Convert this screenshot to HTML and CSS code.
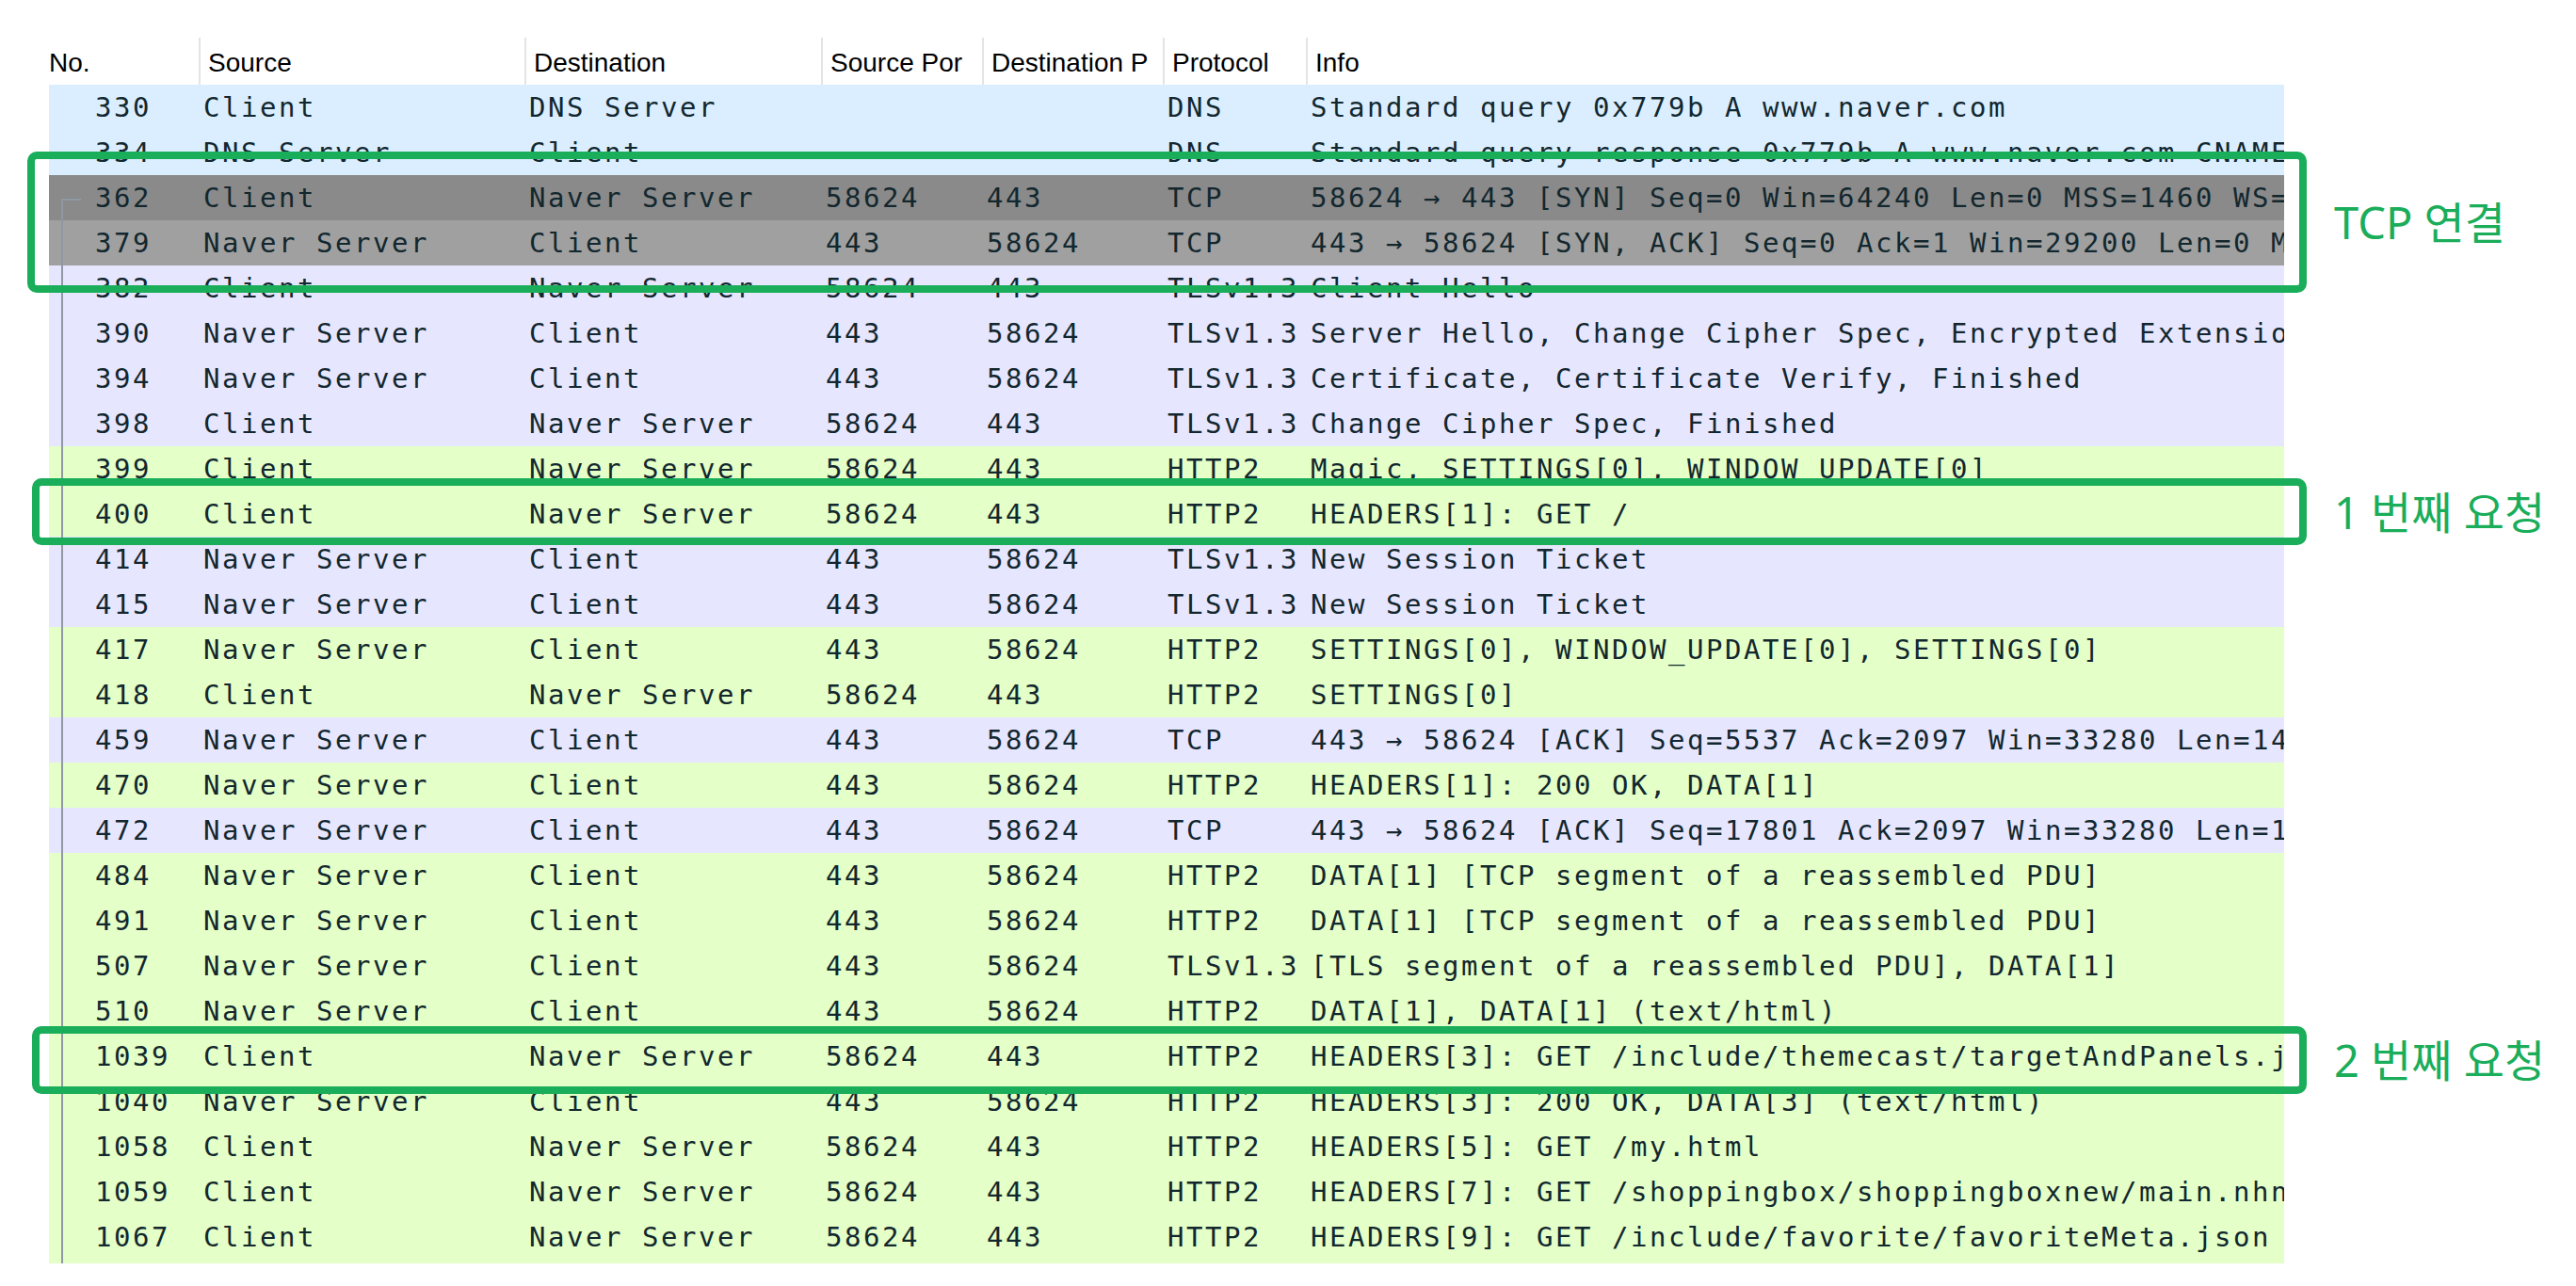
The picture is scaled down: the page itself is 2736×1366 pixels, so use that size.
FILE: index.html
```html
<!DOCTYPE html>
<html lang="ko">
<head>
<meta charset="utf-8">
<title>Wireshark packet list</title>
<link rel="stylesheet" href="styles.css">
</head>
<body>
<div class="capture">
  <div class="packet-list">
    <div class="list-header">
      <div class="hcell first">No.</div>
      <div class="hcell">Source</div>
      <div class="hcell">Destination</div>
      <div class="hcell">Source Por</div>
      <div class="hcell">Destination P</div>
      <div class="hcell">Protocol</div>
      <div class="hcell">Info</div>
    </div>
    <div class="list-body">
      <div class="row udp"><span class="cell no">330</span><span class="cell">Client</span><span class="cell">DNS Server</span><span class="cell"></span><span class="cell"></span><span class="cell">DNS</span><span class="cell">Standard query 0x779b A www.naver.com</span></div>
      <div class="row udp"><span class="cell no">334</span><span class="cell">DNS Server</span><span class="cell">Client</span><span class="cell"></span><span class="cell"></span><span class="cell">DNS</span><span class="cell">Standard query response 0x779b A www.naver.com CNAME www.naver.com.nheos.com A 223.130.195.200</span></div>
      <div class="row syn-sel"><span class="cell no">362</span><span class="cell">Client</span><span class="cell">Naver Server</span><span class="cell">58624</span><span class="cell">443</span><span class="cell">TCP</span><span class="cell">58624 → 443 [SYN] Seq=0 Win=64240 Len=0 MSS=1460 WS=256 SACK_PERM=1</span></div>
      <div class="row syn"><span class="cell no">379</span><span class="cell">Naver Server</span><span class="cell">Client</span><span class="cell">443</span><span class="cell">58624</span><span class="cell">TCP</span><span class="cell">443 → 58624 [SYN, ACK] Seq=0 Ack=1 Win=29200 Len=0 MSS=1460 SACK_PERM=1 WS=128</span></div>
      <div class="row tcp"><span class="cell no">382</span><span class="cell">Client</span><span class="cell">Naver Server</span><span class="cell">58624</span><span class="cell">443</span><span class="cell">TLSv1.3</span><span class="cell">Client Hello</span></div>
      <div class="row tcp"><span class="cell no">390</span><span class="cell">Naver Server</span><span class="cell">Client</span><span class="cell">443</span><span class="cell">58624</span><span class="cell">TLSv1.3</span><span class="cell">Server Hello, Change Cipher Spec, Encrypted Extensions, Certificate</span></div>
      <div class="row tcp"><span class="cell no">394</span><span class="cell">Naver Server</span><span class="cell">Client</span><span class="cell">443</span><span class="cell">58624</span><span class="cell">TLSv1.3</span><span class="cell">Certificate, Certificate Verify, Finished</span></div>
      <div class="row tcp"><span class="cell no">398</span><span class="cell">Client</span><span class="cell">Naver Server</span><span class="cell">58624</span><span class="cell">443</span><span class="cell">TLSv1.3</span><span class="cell">Change Cipher Spec, Finished</span></div>
      <div class="row http"><span class="cell no">399</span><span class="cell">Client</span><span class="cell">Naver Server</span><span class="cell">58624</span><span class="cell">443</span><span class="cell">HTTP2</span><span class="cell">Magic, SETTINGS[0], WINDOW_UPDATE[0]</span></div>
      <div class="row http"><span class="cell no">400</span><span class="cell">Client</span><span class="cell">Naver Server</span><span class="cell">58624</span><span class="cell">443</span><span class="cell">HTTP2</span><span class="cell">HEADERS[1]: GET /</span></div>
      <div class="row tcp"><span class="cell no">414</span><span class="cell">Naver Server</span><span class="cell">Client</span><span class="cell">443</span><span class="cell">58624</span><span class="cell">TLSv1.3</span><span class="cell">New Session Ticket</span></div>
      <div class="row tcp"><span class="cell no">415</span><span class="cell">Naver Server</span><span class="cell">Client</span><span class="cell">443</span><span class="cell">58624</span><span class="cell">TLSv1.3</span><span class="cell">New Session Ticket</span></div>
      <div class="row http"><span class="cell no">417</span><span class="cell">Naver Server</span><span class="cell">Client</span><span class="cell">443</span><span class="cell">58624</span><span class="cell">HTTP2</span><span class="cell">SETTINGS[0], WINDOW_UPDATE[0], SETTINGS[0]</span></div>
      <div class="row http"><span class="cell no">418</span><span class="cell">Client</span><span class="cell">Naver Server</span><span class="cell">58624</span><span class="cell">443</span><span class="cell">HTTP2</span><span class="cell">SETTINGS[0]</span></div>
      <div class="row tcp"><span class="cell no">459</span><span class="cell">Naver Server</span><span class="cell">Client</span><span class="cell">443</span><span class="cell">58624</span><span class="cell">TCP</span><span class="cell">443 → 58624 [ACK] Seq=5537 Ack=2097 Win=33280 Len=1460</span></div>
      <div class="row http"><span class="cell no">470</span><span class="cell">Naver Server</span><span class="cell">Client</span><span class="cell">443</span><span class="cell">58624</span><span class="cell">HTTP2</span><span class="cell">HEADERS[1]: 200 OK, DATA[1]</span></div>
      <div class="row tcp"><span class="cell no">472</span><span class="cell">Naver Server</span><span class="cell">Client</span><span class="cell">443</span><span class="cell">58624</span><span class="cell">TCP</span><span class="cell">443 → 58624 [ACK] Seq=17801 Ack=2097 Win=33280 Len=1460</span></div>
      <div class="row http"><span class="cell no">484</span><span class="cell">Naver Server</span><span class="cell">Client</span><span class="cell">443</span><span class="cell">58624</span><span class="cell">HTTP2</span><span class="cell">DATA[1] [TCP segment of a reassembled PDU]</span></div>
      <div class="row http"><span class="cell no">491</span><span class="cell">Naver Server</span><span class="cell">Client</span><span class="cell">443</span><span class="cell">58624</span><span class="cell">HTTP2</span><span class="cell">DATA[1] [TCP segment of a reassembled PDU]</span></div>
      <div class="row http"><span class="cell no">507</span><span class="cell">Naver Server</span><span class="cell">Client</span><span class="cell">443</span><span class="cell">58624</span><span class="cell">TLSv1.3</span><span class="cell">[TLS segment of a reassembled PDU], DATA[1]</span></div>
      <div class="row http"><span class="cell no">510</span><span class="cell">Naver Server</span><span class="cell">Client</span><span class="cell">443</span><span class="cell">58624</span><span class="cell">HTTP2</span><span class="cell">DATA[1], DATA[1] (text/html)</span></div>
      <div class="row http"><span class="cell no">1039</span><span class="cell">Client</span><span class="cell">Naver Server</span><span class="cell">58624</span><span class="cell">443</span><span class="cell">HTTP2</span><span class="cell">HEADERS[3]: GET /include/themecast/targetAndPanels.json</span></div>
      <div class="row http"><span class="cell no">1040</span><span class="cell">Naver Server</span><span class="cell">Client</span><span class="cell">443</span><span class="cell">58624</span><span class="cell">HTTP2</span><span class="cell">HEADERS[3]: 200 OK, DATA[3] (text/html)</span></div>
      <div class="row http"><span class="cell no">1058</span><span class="cell">Client</span><span class="cell">Naver Server</span><span class="cell">58624</span><span class="cell">443</span><span class="cell">HTTP2</span><span class="cell">HEADERS[5]: GET /my.html</span></div>
      <div class="row http"><span class="cell no">1059</span><span class="cell">Client</span><span class="cell">Naver Server</span><span class="cell">58624</span><span class="cell">443</span><span class="cell">HTTP2</span><span class="cell">HEADERS[7]: GET /shoppingbox/shoppingboxnew/main.nhn</span></div>
      <div class="row http"><span class="cell no">1067</span><span class="cell">Client</span><span class="cell">Naver Server</span><span class="cell">58624</span><span class="cell">443</span><span class="cell">HTTP2</span><span class="cell">HEADERS[9]: GET /include/favorite/favoriteMeta.json</span></div>
    </div>
    <div class="tree-line"></div>
  </div>

  <div class="callout callout-tcp"><span class="callout-label">TCP 연결</span></div>
  <div class="callout callout-req1"><span class="callout-label">1 번째 요청</span></div>
  <div class="callout callout-req2"><span class="callout-label">2 번째 요청</span></div>
</div>
</body>
</html>
```
FILE: styles.css
```css
html, body {
  margin: 0;
  padding: 0;
  background: #ffffff;
}

.capture {
  position: relative;
  width: 2736px;
  height: 1366px;
  padding: 40px 0 0 52px;
  box-sizing: border-box;
  overflow: hidden;
}

.packet-list {
  position: relative;
  width: 2374px;
}

.list-header,
.row {
  display: grid;
  grid-template-columns: 159px 346px 315px 171px 192px 152px 1039px;
}

.list-header {
  height: 50px;
}

.hcell {
  box-sizing: border-box;
  height: 50px;
  padding: 4px 0 0 8px;
  line-height: 46px;
  border-left: 2px solid #e4e4e4;
  font-family: "Liberation Sans", Arial, sans-serif;
  font-size: 28px;
  color: #000000;
  white-space: nowrap;
  overflow: hidden;
}

.hcell.first {
  border-left: none;
  padding-left: 0;
}

.list-body {
  background: #e4ffc7;
  padding-bottom: 4px;
}

.row {
  height: 48px;
}

.cell {
  display: block;
  box-sizing: border-box;
  padding: 1px 0 0 5px;
  line-height: 47px;
  font-family: "DejaVu Sans Mono", "Liberation Mono", monospace;
  font-size: 29px;
  letter-spacing: 2.54px;
  color: #12272e;
  white-space: pre;
  overflow: hidden;
}

.cell.no {
  padding-left: 49px;
}

.udp { background: #daeeff; }
.syn-sel { background: #8a8a8a; }
.syn { background: #a0a0a0; }
.tcp { background: #e7e6ff; }
.http { background: #e4ffc7; }

.tree-line {
  position: absolute;
  left: 13px;
  top: 171px;
  bottom: 0;
  width: 21px;
  box-sizing: border-box;
  border-left: 2px solid #8e99a4;
  border-top: 2px solid #8e99a4;
  pointer-events: none;
}

.callout {
  position: absolute;
  box-sizing: border-box;
  border: 8px solid #1aad5a;
  border-radius: 10px;
}

.callout-tcp {
  left: 29px;
  top: 161px;
  width: 2421px;
  height: 150px;
}

.callout-req1 {
  left: 34px;
  top: 508px;
  width: 2416px;
  height: 71px;
}

.callout-req2 {
  left: 34px;
  top: 1090px;
  width: 2416px;
  height: 72px;
}

.callout-label {
  position: absolute;
  left: calc(100% + 37px);
  top: 50%;
  transform: translateY(-50%);
  font-family: "Noto Sans", "Noto Sans CJK KR", sans-serif;
  font-size: 47px;
  line-height: 1;
  color: #1aad5a;
  white-space: nowrap;
}
```
